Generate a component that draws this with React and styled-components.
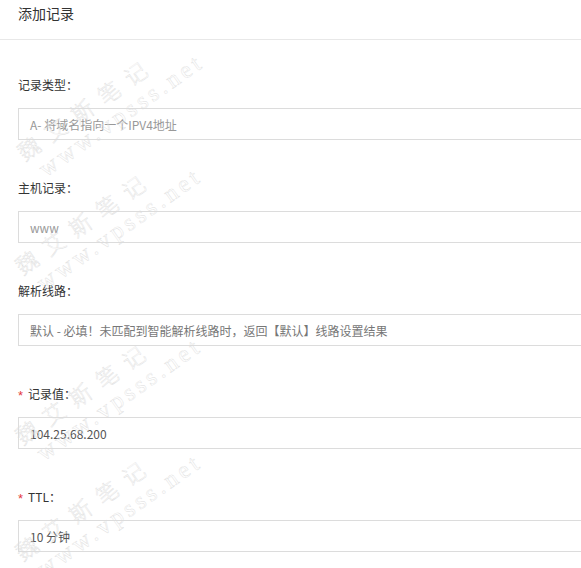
import React from "react";
import styled, { createGlobalStyle } from "styled-components";

const Global = createGlobalStyle`
  html, body { margin: 0; padding: 0; background: #fff; }
  body {
    font-family: "Noto Sans CJK SC", "Microsoft YaHei", sans-serif;
    overflow: hidden;
  }
`;

const Page = styled.div`
  position: relative;
  width: 581px;
  height: 568px;
  overflow: hidden;
  background: #fff;
`;

const Header = styled.div`
  height: 40px;
  border-bottom: 1px solid #e8e8e8;
  padding: 3px 18px 0;
  box-sizing: border-box;
  font-size: 14px;
  line-height: 20px;
  color: #333;
`;

const Form = styled.div`
  padding: 35px 0 0 18px;
  display: flex;
  flex-direction: column;
`;

const Item = styled.div`
  display: flex;
  flex-direction: column;
  margin-bottom: 38px;
`;

const Label = styled.div`
  display: flex;
  align-items: center;
  height: 20px;
  font-size: 12px;
  line-height: 20px;
  color: #333;
  margin-bottom: 13px;
`;

const Star = styled.span`
  color: #e4393c;
  font-family: "Liberation Sans", sans-serif;
  font-size: 13px;
  width: 10px;
  margin-top: 3px;
`;

const Field = styled.div`
  box-sizing: border-box;
  width: 620px;
  height: 32px;
  border: 1px solid #dcdcdc;
  padding-left: 11px;
  display: flex;
  align-items: center;
  font-size: 12px;
  color: ${(p) => p.$color};
  white-space: nowrap;
`;

const Mark = styled.div`
  position: absolute;
  left: 0;
  top: 0;
  transform-origin: 0 0;
  pointer-events: none;
  display: flex;
  flex-direction: column;
  align-items: flex-start;
  white-space: nowrap;
  color: transparent;
  -webkit-text-stroke: 0.4px #dddddd;
`;

const MarkCn = styled.span`
  font-family: "Noto Sans CJK SC", serif;
  font-weight: 300;
  font-size: 22px;
  line-height: 28px;
  letter-spacing: 10.5px;
`;

const MarkEn = styled.span`
  font-family: "Liberation Serif", serif;
  font-size: 24px;
  line-height: 26px;
  letter-spacing: 4px;
  margin-left: 8px;
`;

const fields = [
  { label: "记录类型：", value: "A- 将域名指向一个IPV4地址", color: "#999" },
  { label: "主机记录：", value: "www", color: "#999" },
  {
    label: "解析线路：",
    value: "默认 - 必填！未匹配到智能解析线路时，返回【默认】线路设置结果",
    color: "#777",
  },
  { label: "记录值：", value: "104.25.68.200", req: true, color: "#555" },
  { label: "TTL：", value: "10 分钟", req: true, color: "#555" },
];

const marks = [
  [11, 142],
  [9, 256],
  [9, 426],
  [9, 542],
];

export default function App() {
  return (
    <Page>
      <Global />
      <Header>添加记录</Header>
      <Form>
        {fields.map((f) => (
          <Item key={f.label}>
            <Label>
              {f.req && <Star>*</Star>}
              {f.label}
            </Label>
            <Field $color={f.color}>{f.value}</Field>
          </Item>
        ))}
      </Form>
      {marks.map(([x, y], i) => (
        <Mark key={i} style={{ transform: `translate(${x}px, ${y}px) rotate(-35deg)` }}>
          <MarkCn>魏艾斯笔记</MarkCn>
          <MarkEn>www.vpsss.net</MarkEn>
        </Mark>
      ))}
    </Page>
  );
}
